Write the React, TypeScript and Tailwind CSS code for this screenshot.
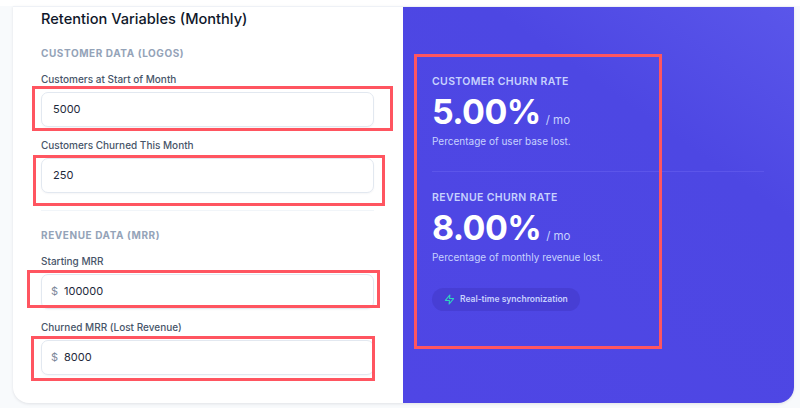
const font = { fontFamily: "Inter, 'Liberation Sans', sans-serif" };

function Field({ label, value, prefix, mt }: { label: string; value: string; prefix?: boolean; mt: string }) {
  return (
    <div className={mt}>
      <div className="text-[10px] leading-[14px] font-medium text-[#475569]">{label}</div>
      <div className="mt-[6px] flex h-[35px] w-[333px] items-center rounded-[7px] border border-[#e2e8f0] bg-white pl-[11px] text-[11px] text-[#1e293b] shadow-[0_1px_2px_rgba(15,23,42,0.04)]">
        {prefix && <span className="mr-[7px] ml-[-2px] w-[6px] text-[11px] text-[#7c8799]">$</span>}
        <span>{value}</span>
      </div>
    </div>
  );
}

function Stat({ title, value, note, mt }: { title: string; value: string; note: string; mt: string }) {
  return (
    <div className={mt}>
      <div className="text-[10.5px] leading-[14px] font-semibold tracking-[0.35px] text-[#c7d2fe]">{title}</div>
      <div className="mt-[6px] flex h-[34px] items-baseline">
        <span className="text-[34px] leading-[34px] font-bold tracking-[-0.6px] text-white">{value}</span>
        <span className="ml-[5px] text-[11.5px] text-[#c7d2fe]">/ mo</span>
      </div>
      <div className="mt-[5px] text-[10px] leading-[14px] text-[#c7d2fe]">{note}</div>
    </div>
  );
}

const Mark = ({ c }: { c: string }) => (
  <div className={`pointer-events-none absolute border-[3px] border-[#ff5560] ${c}`} />
);

export default function App() {
  return (
    <div className="relative h-[408px] w-[800px] overflow-hidden bg-[#f8fafc]" style={font}>
      <div className="h-[6px] bg-white" />
      <div className="ml-[13px] flex h-[397px] w-[781px] overflow-hidden rounded-b-[16px] border-t border-[#eef1f6] bg-white shadow-[0_1px_3px_rgba(15,23,42,0.1)]">
        <div className="w-[390px] shrink-0 pl-[28px] pt-[2px]">
          <div className="text-[14.6px] leading-[20px] font-medium text-[#0f172a]">Retention Variables (Monthly)</div>
          <div className="mt-[17px] text-[10px] leading-[14px] font-bold tracking-[0.57px] text-[#94a3b8]">CUSTOMER DATA (LOGOS)</div>
          <Field mt="mt-[12px]" label="Customers at Start of Month" value="5000" />
          <Field mt="mt-[11px]" label="Customers Churned This Month" value="250" />
          <div className="mt-[17px] w-[333px] border-t border-[#f1f5f9]" />
          <div className="mt-[17px] text-[10px] leading-[14px] font-bold tracking-[0.57px] text-[#94a3b8]">REVENUE DATA (MRR)</div>
          <Field mt="mt-[12px]" label="Starting MRR" value="100000" prefix />
          <Field mt="mt-[11px]" label="Churned MRR (Lost Revenue)" value="8000" prefix />
        </div>
        <div className="flex-1 bg-[linear-gradient(215deg,#5a56ea_0%,#4d47e3_32%,#4f46e5_100%)] pl-[29px] pt-[68px]">
          <Stat mt="" title="CUSTOMER CHURN RATE" value="5.00%" note="Percentage of user base lost." />
          <div className="mt-[23px] w-[332px] border-t border-[#5c55ea]" />
          <Stat mt="mt-[19px]" title="REVENUE CHURN RATE" value="8.00%" note="Percentage of monthly revenue lost." />
          <div className="mt-[24px] flex h-[23px] w-[148px] items-center gap-[5px] rounded-full bg-[#4338ca]/60 pl-[12px]">
            <svg width="11" height="13" viewBox="0 0 24 24" fill="none" stroke="#2dd4bf" strokeWidth="2.2" strokeLinecap="round" strokeLinejoin="round">
              <path d="M13 2 3 14h9l-1 8 10-12h-9l1-8z" />
            </svg>
            <span className="text-[8.5px] font-semibold text-[#c7d2fe]">Real-time synchronization</span>
          </div>
        </div>
      </div>
      <Mark c="left-[32px] top-[86px] h-[45px] w-[361px]" />
      <Mark c="left-[33px] top-[155px] h-[51px] w-[352px]" />
      <Mark c="left-[27px] top-[270px] h-[38px] w-[353px]" />
      <Mark c="left-[31px] top-[336px] h-[45px] w-[344px]" />
      <Mark c="left-[414px] top-[54px] h-[295px] w-[248px]" />
    </div>
  );
}
